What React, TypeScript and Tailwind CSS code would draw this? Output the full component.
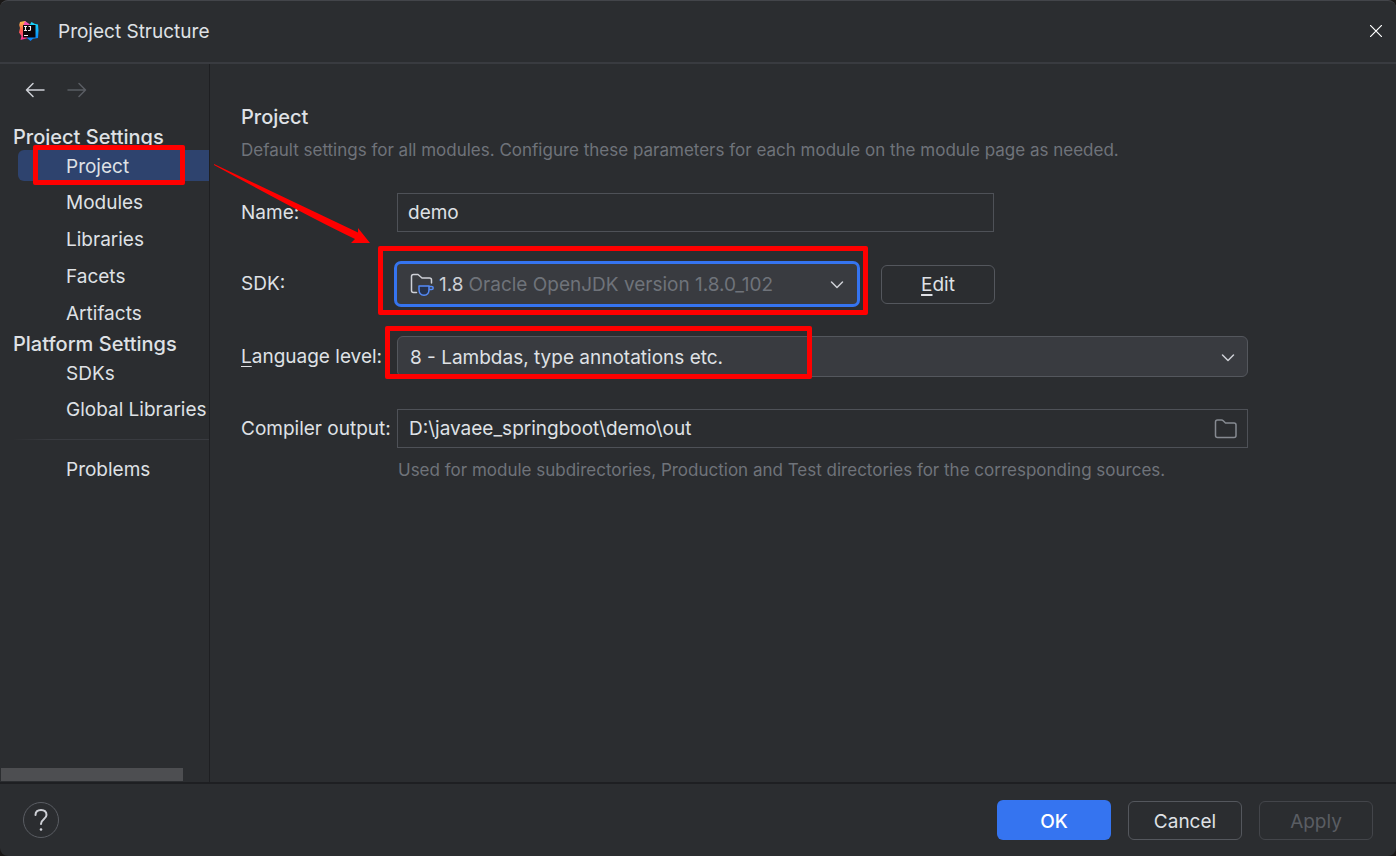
import type { ReactNode } from 'react'
import { clsx } from 'clsx'

// =============================================================================
// Data
// =============================================================================

const PROJECT_ITEMS = ['Project', 'Modules', 'Libraries', 'Facets', 'Artifacts']
const PLATFORM_ITEMS = ['SDKs', 'Global Libraries']

// =============================================================================
// Icons
// =============================================================================

function AppLogo() {
  return (
    <svg className="w-5 h-5 shrink-0" viewBox="0 0 20 20" aria-hidden="true">
      <defs>
        <linearGradient id="warm" x1="0" y1="0" x2="0" y2="1">
          <stop offset="0" stopColor="#fcc24a" />
          <stop offset="0.5" stopColor="#fb5a4b" />
          <stop offset="1" stopColor="#ff2fa0" />
        </linearGradient>
        <linearGradient id="cool" x1="0" y1="0" x2="0" y2="1">
          <stop offset="0" stopColor="#19d8f5" />
          <stop offset="1" stopColor="#087cfa" />
        </linearGradient>
      </defs>
      <path d="M1 1 6 0l3 3v14l-7.500 2 1-4L0 11.500 1 7 .200 4Z" fill="url(#warm)" />
      <path d="M6 0 11 3.500l-3 3L4 5Z" fill="#f04fb5" />
      <path d="M11 3.500 12.500 1l3 1.800L19 3.500l.500 6-.500 7.500-5 .800L11.500 20 8 17Z" fill="url(#cool)" />
      <path d="M4 4h12.500v12.500H4Z" fill="#0b0508" />
      <path
        d="M5 5.500h3M6.500 5.500v4M5 9.500h3M9.500 5.500h2v3q0 1-1 1H9M5 14.500h4"
        fill="none"
        stroke="#f4f0f2"
        strokeWidth="1.1"
      />
    </svg>
  )
}

function ArrowIcon({ forward }: { forward?: boolean }) {
  return (
    <svg
      className={clsx('w-5 h-5', forward && 'rotate-180')}
      viewBox="0 0 20 20"
      fill="none"
      stroke="currentColor"
      strokeWidth="1.5"
      strokeLinecap="round"
      strokeLinejoin="round"
      aria-hidden="true"
    >
      <path d="M8 3.500 1.500 10l6.500 6.500M1.500 10h17.500" />
    </svg>
  )
}

function Chevron() {
  return (
    <svg
      className="absolute right-3 top-1/2 -translate-y-1/2 w-4 h-4 text-[#ced0d6] pointer-events-none"
      viewBox="0 0 16 16"
      fill="none"
      stroke="currentColor"
      strokeWidth="1.5"
      strokeLinecap="round"
      strokeLinejoin="round"
      aria-hidden="true"
    >
      <path d="m2.500 6 5.500 5.500L13.500 6" />
    </svg>
  )
}

function SdkIcon() {
  return (
    <svg className="w-6 h-6 shrink-0" viewBox="0 0 24 24" fill="none" strokeWidth="1.5" aria-hidden="true">
      <path
        d="M6.500 20.500H3.500Q1.500 20.500 1.500 18.500V4.500Q1.500 2.500 3.500 2.500H8L12 6H19.500Q21.500 6 21.500 8V11"
        stroke="#ced0d6"
        strokeLinecap="round"
        strokeLinejoin="round"
      />
      <path d="M9 14H19V17.500Q19 23.200 14 23.200T9 17.500Z" fill="#25324d" stroke="#548af7" strokeLinejoin="round" />
      <path d="M19 14.500H21.500Q23.200 14.500 23.200 16T21.500 17.500H19" stroke="#548af7" />
    </svg>
  )
}

function FolderIcon() {
  return (
    <svg
      className="w-6 h-6"
      viewBox="0 0 24 24"
      fill="none"
      stroke="currentColor"
      strokeWidth="1.5"
      strokeLinejoin="round"
      aria-hidden="true"
    >
      <path d="M1.500 18.500V5Q1.500 3 3.500 3H7.500Q8.500 3 9.200 3.700L11.500 6H20Q22 6 22 8V18.500Q22 20.500 20 20.500H3.500Q1.500 20.500 1.500 18.500Z" />
    </svg>
  )
}

// =============================================================================
// Annotations
// =============================================================================

function Marker({ className }: { className: string }) {
  return <div className={clsx('absolute border-5 border-[#ff0000] rounded-xs pointer-events-none', className)} />
}

function MarkerArrow() {
  return (
    <svg
      className="absolute left-[214px] top-[14px] w-[156px] h-20 max-w-none pointer-events-none"
      viewBox="0 0 156 80"
      aria-hidden="true"
    >
      <path d="M0 0 144 68.500V64L156 79l-19 0 4-4Q95 53 0 1Z" fill="#ff0000" />
    </svg>
  )
}

// =============================================================================
// Sidebar
// =============================================================================

interface NavItemProps {
  label: string
  first?: boolean
  selected?: boolean
}

function NavItem({ label, first, selected }: NavItemProps) {
  return (
    <li className={clsx('relative', first && 'mb-0.5')}>
      <a
        href="#"
        aria-current={selected ? 'page' : undefined}
        className={clsx(
          'flex items-center ml-[18px] pl-12 pt-0.5 rounded-l-md whitespace-nowrap',
          first ? 'h-[31px]' : 'h-[37px]',
          selected && 'bg-[#2e436e]'
        )}
      >
        {label}
      </a>
      {selected && (
        <>
          <Marker className="left-[33px] right-6 -top-[5px] -bottom-1" />
          <MarkerArrow />
        </>
      )}
    </li>
  )
}

function NavSection({ title, items, selected }: { title: string; items: string[]; selected?: string }) {
  return (
    <section>
      <h2 className="h-[26px] pl-[13px] text-xl leading-[26px] font-medium whitespace-nowrap">{title}</h2>
      <ul>
        {items.map((item, i) => (
          <NavItem key={item} label={item} first={i === 0} selected={item === selected} />
        ))}
      </ul>
    </section>
  )
}

function Sidebar() {
  return (
    <aside className="relative z-10 flex flex-col w-[210px] shrink-0 border-r border-[#1e1f22]">
      <div className="flex items-center gap-[22px] h-[52px] px-[25px]">
        <button aria-label="Back" className="text-[#ced0d6]">
          <ArrowIcon />
        </button>
        <button aria-label="Forward" disabled className="text-[#5a5d63]">
          <ArrowIcon forward />
        </button>
      </div>
      <nav className="pt-2">
        <NavSection title="Project Settings" items={PROJECT_ITEMS} selected="Project" />
        <NavSection title="Platform Settings" items={PLATFORM_ITEMS} />
        <div className="h-px mt-3 mb-2.5 ml-3 bg-linear-to-r from-transparent to-[#393b40] to-20%" />
        <ul>
          <NavItem label="Problems" />
        </ul>
      </nav>
      <div className="mt-auto mb-px ml-px mr-[26px] h-[13px] bg-[#4d4e51]" />
    </aside>
  )
}

// =============================================================================
// Form
// =============================================================================

function FieldLabel({ htmlFor, children }: { htmlFor: string; children: ReactNode }) {
  return (
    <label htmlFor={htmlFor} className="self-center whitespace-nowrap">
      {children}
    </label>
  )
}

function ProjectForm() {
  return (
    <form className="grid grid-cols-[156px_minmax(0,1fr)] gap-y-8 mt-[31px]">
      <FieldLabel htmlFor="name">Name:</FieldLabel>
      <input
        id="name"
        defaultValue="demo"
        className="w-full max-w-[597px] h-[39px] px-2.5 bg-[#2b2d30] border border-[#4e5157] outline-none"
      />

      <FieldLabel htmlFor="sdk">SDK:</FieldLabel>
      <div className="flex items-center gap-6 h-10">
        <div className="relative flex items-center w-[460px] h-10 pl-[13px] bg-[#393b40] rounded-sm ring-3 ring-[#3574f0]">
          <SdkIcon />
          <span className="px-[5px] pt-px text-[#ced0d6]">1.8</span>
          <select id="sdk" className="flex-1 h-full pt-px appearance-none bg-transparent text-[#6f737a] outline-none">
            <option>Oracle OpenJDK version 1.8.0_102</option>
          </select>
          <Chevron />
          <Marker className="-left-[19px] -right-[11px] -top-[18px] -bottom-[11px]" />
        </div>
        <button type="button" className="w-[114px] h-[39px] pt-px border border-[#54575d] rounded-md">
          <span className="underline underline-offset-3 decoration-2">E</span>dit
        </button>
      </div>

      <FieldLabel htmlFor="level">
        <span className="underline underline-offset-3">L</span>anguage level:
      </FieldLabel>
      <div className="relative">
        <select
          id="level"
          className="w-full h-[41px] pl-3 pt-0.5 appearance-none bg-[#393b40] border border-[#54575d] rounded-md outline-none"
        >
          <option>8 - Lambdas, type annotations etc.</option>
        </select>
        <Chevron />
        <Marker className="-left-3 w-[427px] -top-2.5 -bottom-0.5" />
      </div>

      <FieldLabel htmlFor="output">Compiler output:</FieldLabel>
      <div className="relative">
        <input
          id="output"
          defaultValue="D:\javaee_springboot\demo\out"
          className="w-full h-[39px] pl-[11px] pr-12 bg-[#2b2d30] border border-[#4e5157] outline-none"
        />
        <button
          type="button"
          aria-label="Browse"
          className="absolute right-2.5 top-1/2 -translate-y-1/2 text-[#868a91]"
        >
          <FolderIcon />
        </button>
      </div>
    </form>
  )
}

// =============================================================================
// Dialog
// =============================================================================

export default function App() {
  return (
    <div className="bg-[#1a1817]">
      <div className="flex flex-col h-screen bg-[#2b2d30] border-t border-[#43454a] rounded-lg overflow-hidden font-['Inter',sans-serif] text-[19px] leading-6 text-[#dfe1e5]">
        <header className="flex items-center h-[63px] shrink-0 pb-px pl-[19px] pr-3.5 border-b-2 border-[#393b40]">
          <AppLogo />
          <h1 className="pl-[19px] pt-px">Project Structure</h1>
          <button aria-label="Close" className="ml-auto text-white">
            <svg className="w-3 h-3" viewBox="0 0 12 12" stroke="currentColor" strokeWidth="1.2" aria-hidden="true">
              <path d="m0 0 12 12M12 0 0 12" />
            </svg>
          </button>
        </header>

        <div className="flex flex-1 min-h-0">
          <Sidebar />
          <main className="flex-1 min-w-0 pt-[41px] pl-[31px] pr-[148px]">
            <h2 className="text-xl leading-6 font-medium">Project</h2>
            <p className="mt-[9px] text-[17px] text-[#6f737a]">
              Default settings for all modules. Configure these parameters for each module on the module page as needed.
            </p>
            <ProjectForm />
            <p className="mt-2.5 ml-[157px] text-[17px] text-[#6f737a]">
              Used for module subdirectories, Production and Test directories for the corresponding sources.
            </p>
          </main>
        </div>

        <footer className="flex items-center h-[74px] shrink-0 px-[23px] border-t-2 border-[#1e1f22]">
          <button
            aria-label="Help"
            className="flex items-center justify-center w-9 h-9 rounded-full border border-[#5a5d63]"
          >
            <svg className="w-6 h-6" viewBox="0 0 24 24" fill="none" stroke="#ced0d6" strokeWidth="2" aria-hidden="true">
              <path d="M6.500 7Q6.500 2 12 2T17.500 7C17.500 11 12 11 12 16" strokeLinecap="round" />
              <circle cx="12" cy="21.500" r="1.300" fill="#ced0d6" stroke="none" />
            </svg>
          </button>
          <div className="flex items-center gap-[17px] ml-auto">
            <button className="w-[114px] h-10 pt-[3px] rounded-md bg-[#3574f0] font-medium text-white">OK</button>
            <button className="w-[114px] h-[39px] pt-[3px] rounded-md border border-[#54575d]">Cancel</button>
            <button disabled className="w-[114px] h-[39px] pt-[3px] rounded-md border border-[#43454a] text-[#5a5d63]">
              Apply
            </button>
          </div>
        </footer>
      </div>
    </div>
  )
}
